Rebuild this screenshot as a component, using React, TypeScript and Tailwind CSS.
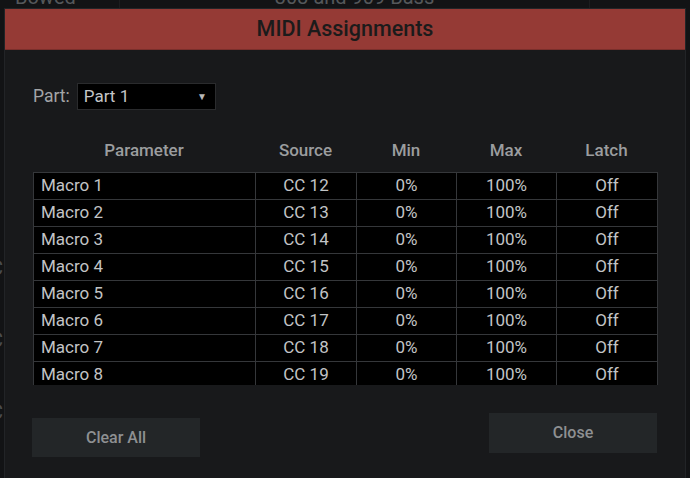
import React from "react";

const rows = [1, 2, 3, 4, 5, 6, 7, 8].map((i) => ({
  name: `Macro ${i}`,
  src: `CC ${11 + i}`,
}));

const cols = "grid grid-cols-[222px_101px_100px_100px_101px]";

export default function App() {
  return (
    <div
      className="relative w-[690px] h-[478px] overflow-hidden bg-[#121315]"
      style={{ fontFamily: "Roboto, 'Liberation Sans', sans-serif" }}
    >
      {/* background app content peeking out */}
      <div className="flex items-start text-[20px] text-[#55585b] mt-[-15px] leading-[24px]">
        <div className="w-[120px] pl-[15px] border-r border-[#1c1d1f] h-[24px]">Bowed</div>
        <div className="w-[470px] text-center border-r border-[#1c1d1f] h-[24px]">303 and 909 Bass</div>
      </div>
      <div className="absolute left-[-10px] top-[256px] text-[20px] text-[#4a4c4f] leading-[24px] flex flex-col gap-[48px]">
        <span>C</span>
        <span>C</span>
        <span>C</span>
      </div>

      {/* dialog */}
      <div className="absolute left-[4px] top-[8px] w-[682px] h-[480px] bg-[#18191b] border border-[#222427] flex flex-col">
        <div className="h-[41px] bg-[#953a35] border-b border-[#7a2f2b] flex items-center justify-center text-[21.5px] font-medium text-[#1b1b1b]">
          MIDI Assignments
        </div>

        <div className="flex items-center mt-[33px] ml-[28px] h-[27px]">
          <span className="text-[17.5px] text-[#a3a5a7] mr-[7px]">Part:</span>
          <div className="w-[139px] h-[27px] bg-black border border-[#2a2b2d] flex items-center justify-between pl-[6px] pr-[8px] text-[17px] text-[#c4c6c8]">
            <span>Part 1</span>
            <span className="text-[10px] text-[#b8b8b8]">▼</span>
          </div>
        </div>

        <div className={`${cols} ml-[28px] mt-[28px] text-[17px] font-medium text-[#9b9d9f] h-[22px] items-center`}>
          <div className="text-center">Parameter</div>
          <div className="text-center">Source</div>
          <div className="text-center">Min</div>
          <div className="text-center">Max</div>
          <div className="text-center">Latch</div>
        </div>

        <div className="ml-[28px] mt-[12px] w-[625px] h-[213px] overflow-hidden border-t border-l border-[#35373a] bg-black text-[17px] text-[#c2c4c6]">
          {rows.map((r) => (
            <div key={r.name} className={`${cols} h-[27px]`}>
              <div className="border-r border-b border-[#35373a] pl-[7px] flex items-center">{r.name}</div>
              <div className="border-r border-b border-[#35373a] flex items-center justify-center">{r.src}</div>
              <div className="border-r border-b border-[#35373a] flex items-center justify-center">0%</div>
              <div className="border-r border-b border-[#35373a] flex items-center justify-center">100%</div>
              <div className="border-r border-b border-[#35373a] flex items-center justify-center">Off</div>
            </div>
          ))}
        </div>

        <div className="flex justify-between items-start ml-[27px] mr-[28px] mt-[28px]">
          <button className="mt-[5px] w-[168px] h-[39px] bg-[#232628] text-[16px] font-medium text-[#8e9092]">
            Clear All
          </button>
          <button className="w-[168px] h-[40px] bg-[#232628] text-[16px] font-medium text-[#8e9092]">
            Close
          </button>
        </div>
      </div>
    </div>
  );
}
